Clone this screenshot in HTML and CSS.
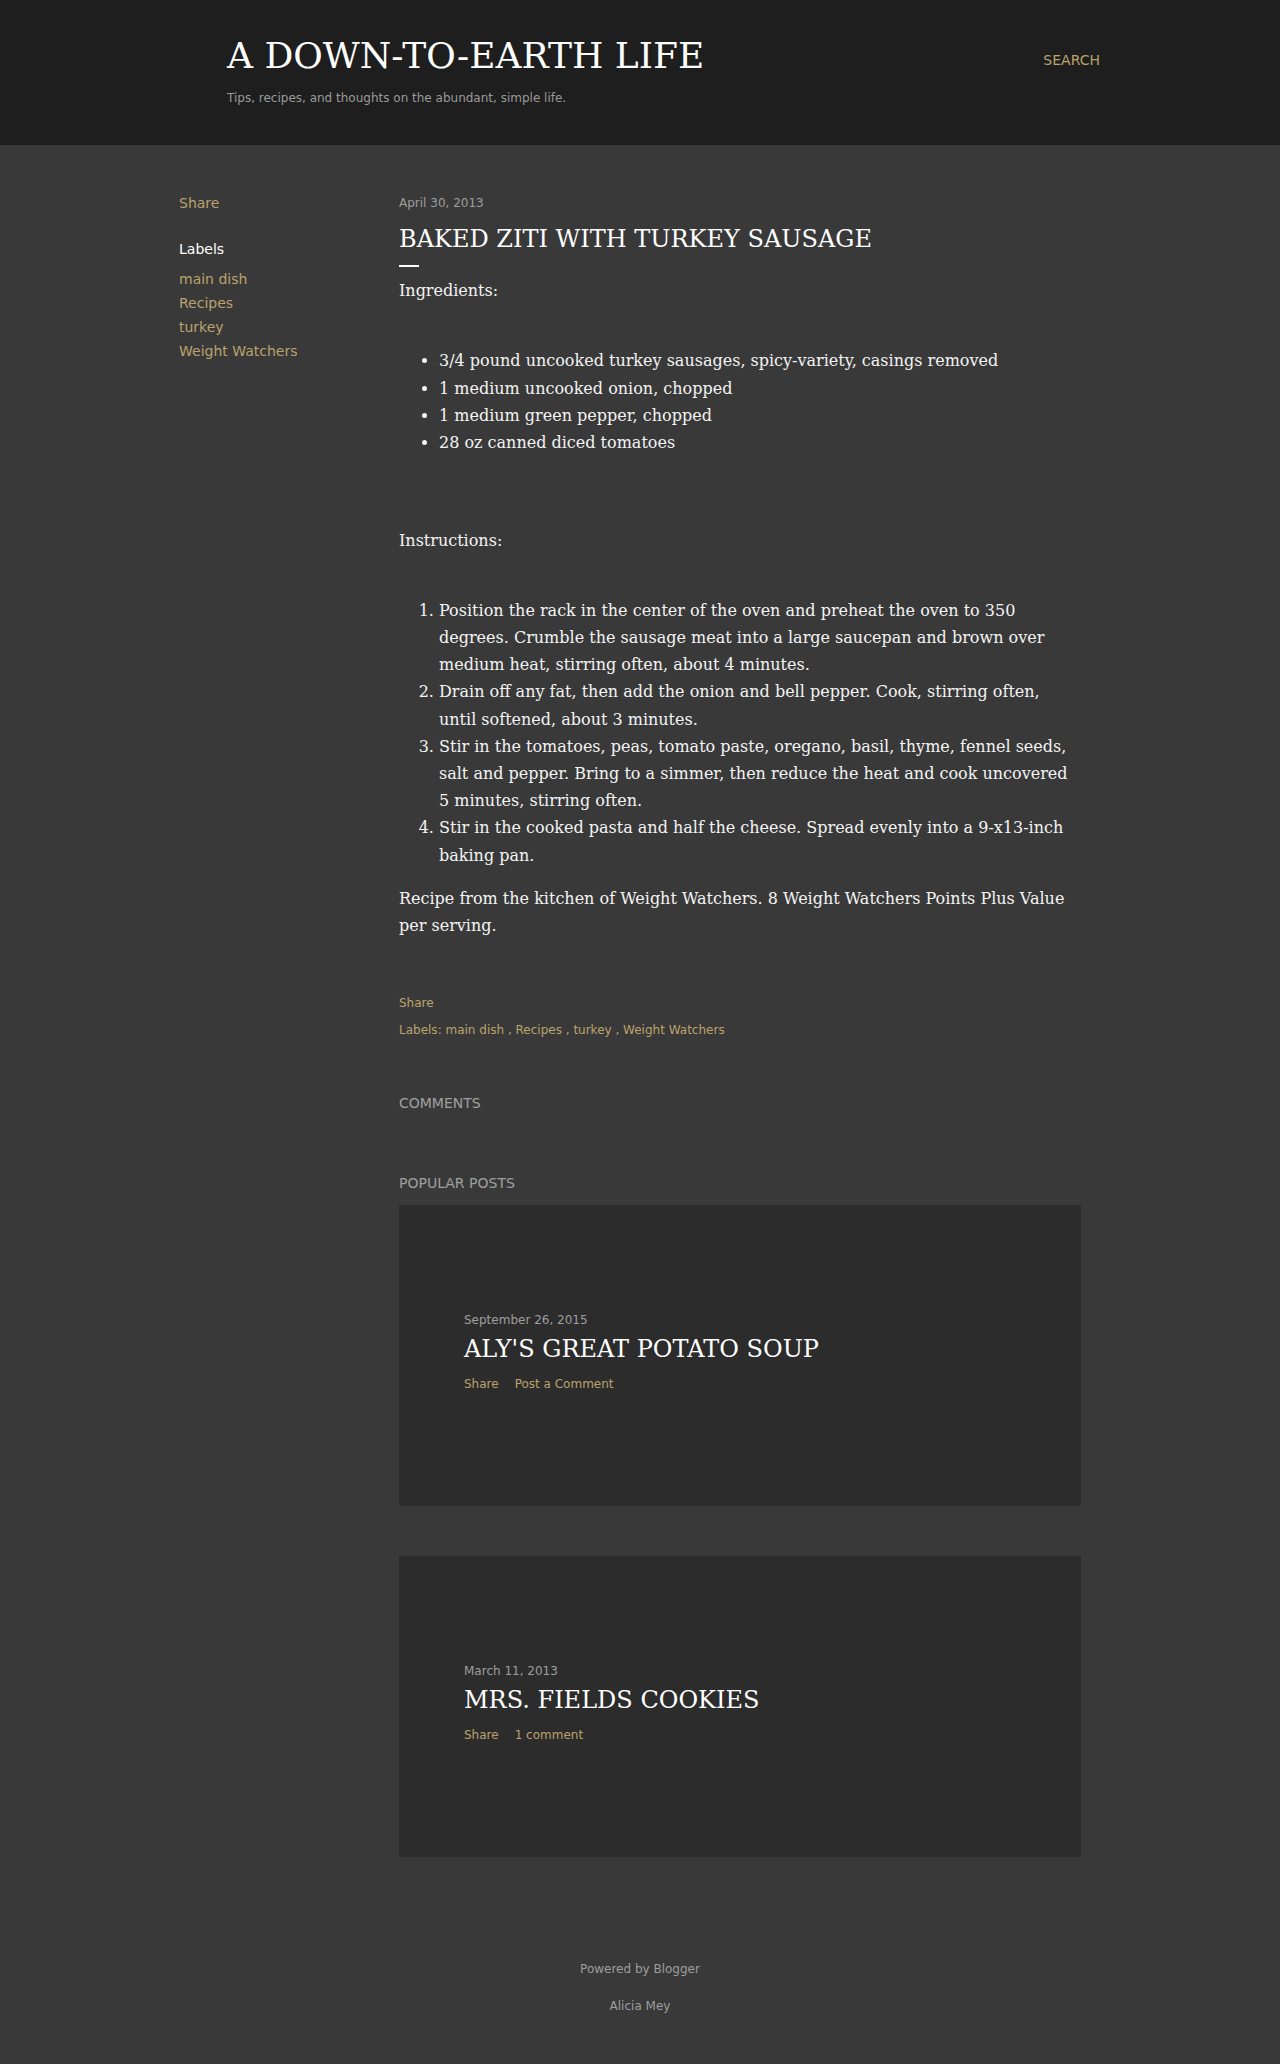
FILE: index.html
```html
<!DOCTYPE html>
<html lang="en">
<head>
<meta charset="utf-8">
<title>A Down-To-Earth Life: Baked Ziti with Turkey Sausage</title>
<link rel="stylesheet" href="styles.css">
</head>
<body>
<header class="site-header">
  <div class="header-text">
    <h1 class="blog-title">A DOWN-TO-EARTH LIFE</h1>
    <p class="blog-desc">Tips, recipes, and thoughts on the abundant, simple life.</p>
  </div>
  <a class="search-link" href="#">SEARCH</a>
</header>

<div class="page-body">
  <aside class="sidebar">
    <a class="side-share" href="#">Share</a>
    <h3 class="side-heading">Labels</h3>
    <ul class="side-labels">
      <li><a href="#">main dish</a></li>
      <li><a href="#">Recipes</a></li>
      <li><a href="#">turkey</a></li>
      <li><a href="#">Weight Watchers</a></li>
    </ul>
  </aside>

  <main class="main-col">
    <article class="post">
      <div class="post-date">April 30, 2013</div>
      <h2 class="post-title">BAKED ZITI WITH TURKEY SAUSAGE</h2>
      <div class="title-rule"></div>
      <div class="post-body">
        <p class="section-label">Ingredients:</p>
        <ul class="ingredients">
          <li>3/4 pound uncooked turkey sausages, spicy-variety, casings removed</li>
          <li>1 medium uncooked onion, chopped</li>
          <li>1 medium green pepper, chopped</li>
          <li>28 oz canned diced tomatoes</li>
        </ul>
        <p class="section-label">Instructions:</p>
        <ol class="instructions">
          <li>Position the rack in the center of the oven and preheat the oven to 350 degrees. Crumble the sausage meat into a large saucepan and brown over medium heat, stirring often, about 4 minutes.</li>
          <li>Drain off any fat, then add the onion and bell pepper. Cook, stirring often, until softened, about 3 minutes.</li>
          <li>Stir in the tomatoes, peas, tomato paste, oregano, basil, thyme, fennel seeds, salt and pepper. Bring to a simmer, then reduce the heat and cook uncovered 5 minutes, stirring often.</li>
          <li>Stir in the cooked pasta and half the cheese. Spread evenly into a 9-x13-inch baking pan.</li>
        </ol>
        <p>Recipe from the kitchen of Weight Watchers. 8 Weight Watchers Points Plus Value per serving.</p>
      </div>
      <div class="post-footer">
        <a class="footer-share" href="#">Share</a>
        <div class="footer-labels">Labels: <a href="#">main dish</a> , <a href="#">Recipes</a> , <a href="#">turkey</a> , <a href="#">Weight Watchers</a></div>
      </div>
    </article>

    <h3 class="section-title comments-title">COMMENTS</h3>
    <h3 class="section-title popular-title">POPULAR POSTS</h3>

    <div class="popular-list">
      <div class="snippet-card">
        <div class="post-date">September 26, 2015</div>
        <h2 class="snippet-title">ALY'S GREAT POTATO SOUP</h2>
        <div class="snippet-links"><a href="#">Share</a><a href="#">Post a Comment</a></div>
      </div>
      <div class="snippet-card">
        <div class="post-date">March 11, 2013</div>
        <h2 class="snippet-title">MRS. FIELDS COOKIES</h2>
        <div class="snippet-links"><a href="#">Share</a><a href="#">1 comment</a></div>
      </div>
    </div>
  </main>
</div>

<footer class="site-footer">
  <div class="powered">Powered by Blogger</div>
  <div class="author">Alicia Mey</div>
</footer>
</body>
</html>
```

FILE: styles.css
```css
html, body {
  margin: 0;
  padding: 0;
}
body {
  background: #393939;
  color: #ffffff;
  font-family: "DejaVu Sans", "Noto Sans", sans-serif;
  min-height: 2064px;
}
a {
  color: #bba26d;
  text-decoration: none;
}

/* Header */
.site-header {
  background: #1e1e1e;
  height: 145px;
  box-sizing: border-box;
  padding: 34px 180px 0 227px;
  display: flex;
  justify-content: space-between;
  align-items: flex-start;
}
.blog-title {
  margin: 0;
  font-family: "DejaVu Serif", "Liberation Serif", serif;
  font-weight: normal;
  font-size: 36px;
  line-height: 44px;
  color: #ffffff;
}
.blog-desc {
  margin: 10px 0 0;
  font-size: 12px;
  line-height: 20px;
  color: #9a9a9a;
}
.search-link {
  margin-top: 16px;
  font-size: 14px;
  line-height: 20px;
  color: #bba26d;
}

/* Body layout */
.page-body {
  display: flex;
  padding: 46px 0 0 179px;
}
.sidebar {
  flex: 0 0 220px;
  display: flex;
  flex-direction: column;
  align-items: flex-start;
  font-size: 14px;
  line-height: 24px;
}
.side-heading {
  margin: 22px 0 6px;
  font-size: 14px;
  font-weight: normal;
  line-height: 24px;
  color: #ffffff;
}
.side-labels {
  list-style: none;
  margin: 0;
  padding: 0;
}
.main-col {
  width: 682px;
}

/* Post */
.post-date {
  font-size: 12px;
  line-height: 18px;
  color: #9e9e9e;
}
.post > .post-date {
  margin-top: 3px;
}
.post-title {
  margin: 11px 0 0;
  font-family: "DejaVu Serif", "Liberation Serif", serif;
  font-weight: normal;
  font-size: 24px;
  line-height: 32px;
  color: #ffffff;
}
.title-rule {
  width: 20px;
  height: 2px;
  background: #ffffff;
  margin: 10px 0 10px;
}
.post-body {
  font-family: "DejaVu Serif", "Liberation Serif", serif;
  font-size: 16px;
  line-height: 1.7;
  color: #f4f4f4;
}
.post-body p {
  margin: 0;
}
.post-body .section-label {
  margin-bottom: 43.2px;
}
.post-body ul,
.post-body ol {
  margin: 0;
  padding-left: 40px;
}
.post-body .ingredients {
  margin-bottom: 70.4px;
}
.post-body .instructions {
  margin-bottom: 16px;
}

.post-footer {
  margin-top: 55px;
  font-size: 12px;
  line-height: 18px;
}
.footer-share {
  display: inline-block;
}
.footer-labels {
  margin-top: 9px;
  color: #bba26d;
}

.section-title {
  margin: 0;
  font-size: 14px;
  font-weight: normal;
  line-height: 20px;
  color: #a0a0a0;
}
.comments-title {
  margin-top: 54px;
}
.popular-title {
  margin-top: 60px;
}

/* Popular posts */
.popular-list {
  margin-top: 12px;
  display: flex;
  flex-direction: column;
  gap: 50px;
}
.snippet-card {
  background: #2c2c2c;
  height: 301px;
  box-sizing: border-box;
  padding: 106px 65px 0;
}
.snippet-title {
  margin: 4px 0 0;
  font-family: "DejaVu Serif", "Liberation Serif", serif;
  font-weight: normal;
  font-size: 24px;
  line-height: 32px;
  color: #ffffff;
}
.snippet-links {
  margin-top: 10px;
  font-size: 12px;
  line-height: 18px;
  display: flex;
  gap: 16px;
}

/* Footer */
.site-footer {
  margin-top: 103px;
  text-align: center;
  font-size: 12px;
  line-height: 18px;
  color: #9e9e9e;
}
.author {
  margin-top: 19px;
}
```
